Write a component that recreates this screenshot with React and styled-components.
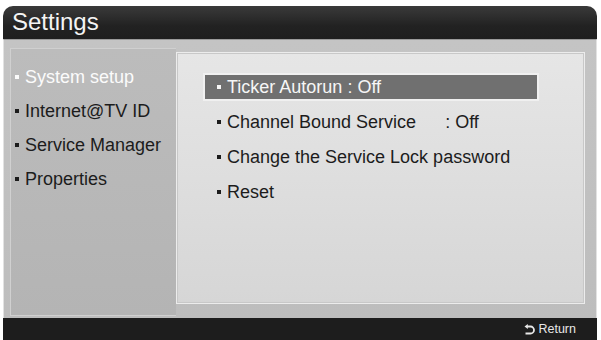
import React from 'react';
import styled, { createGlobalStyle } from 'styled-components';

const GlobalStyle = createGlobalStyle`
  html, body {
    margin: 0;
    padding: 0;
    background: #ffffff;
  }
  body {
    font-family: "Liberation Sans", Arial, sans-serif;
  }
`;

const Screen = styled.div`
  width: 594px;
  height: 334px;
  margin: 6px 0 0 3px;
  display: flex;
  flex-direction: column;
  border-radius: 10px 10px 0 0;
  overflow: hidden;
`;

const TitleBar = styled.div`
  height: 33px;
  flex-shrink: 0;
  background: linear-gradient(to bottom, #3a3a3a, #222222 60%, #1e1e1e);
  color: #f4f4f4;
  font-size: 24px;
  line-height: 32px;
  padding-left: 9px;
`;

const Body = styled.div`
  flex: 1;
  display: flex;
  background: linear-gradient(to bottom, #c4c4c4, #bdbdbd);
  padding: 8px 8px 2px 6px;
  border-left: 1px solid #e2e2e2;
  border-right: 1px solid #e2e2e2;
  border-top: 1px solid #9a9a9a;
`;

const LeftPanel = styled.ul`
  box-sizing: border-box;
  width: 166px;
  flex-shrink: 0;
  margin: 0;
  padding: 18px 0 0 4px;
  list-style: none;
  background: linear-gradient(to bottom, #bcbcbc, #b4b4b4);
  border: 1px solid #d0d0d0;
  border-right: none;
`;

const LeftItem = styled.li`
  font-size: 18px;
  height: 34px;
  line-height: 20px;
  color: ${(p) => (p.$active ? '#fbfbfb' : '#1c1c1c')};
  display: flex;
  align-items: flex-start;
`;

const Bullet = styled.span`
  display: inline-block;
  width: 4px;
  height: 4px;
  margin: 8px 6px 0 0;
  background: currentColor;
  flex-shrink: 0;
`;

const RightPanel = styled.ul`
  flex: 1;
  margin: 4px 3px 12px 0;
  padding: 20px 0 0 26px;
  list-style: none;
  background: linear-gradient(to bottom, #e6e6e6, #dedede 50%, #d6d6d6);
  border: 1px solid #ececec;
  box-shadow: inset 0 0 0 1px #c8c8c8;
`;

const RightItem = styled.li`
  width: 336px;
  height: 28px;
  box-sizing: border-box;
  margin-bottom: 7px;
  padding-left: 12px;
  font-size: 18px;
  display: flex;
  align-items: center;
  color: ${(p) => (p.$focus ? '#f6f6f6' : '#1c1c1c')};
  background: ${(p) => (p.$focus ? '#707070' : 'transparent')};
  border: 2px solid ${(p) => (p.$focus ? '#f0f0f0' : 'transparent')};
  white-space: pre;
`;

const RightBullet = styled(Bullet)`
  margin: 0 6px 0 0;
`;

const Value = styled.span`
  margin-left: 29px;
`;

const BottomBar = styled.div`
  height: 22px;
  flex-shrink: 0;
  background: #1d1d1d;
  display: flex;
  justify-content: flex-end;
  align-items: center;
  padding-right: 21px;
  color: #e8e8e8;
  font-size: 12.5px;
`;

const ReturnIcon = styled.svg`
  width: 11px;
  height: 11px;
  margin-right: 3px;
`;

function App() {
  return (
    <>
      <GlobalStyle />
      <Screen>
        <TitleBar>Settings</TitleBar>
        <Body>
          <LeftPanel>
            <LeftItem $active><Bullet />System setup</LeftItem>
            <LeftItem><Bullet />Internet@TV ID</LeftItem>
            <LeftItem><Bullet />Service Manager</LeftItem>
            <LeftItem><Bullet />Properties</LeftItem>
          </LeftPanel>
          <RightPanel>
            <RightItem $focus><RightBullet />Ticker Autorun : Off</RightItem>
            <RightItem><RightBullet />Channel Bound Service<Value>: Off</Value></RightItem>
            <RightItem><RightBullet />Change the Service Lock password</RightItem>
            <RightItem><RightBullet />Reset</RightItem>
          </RightPanel>
        </Body>
        <BottomBar>
          <ReturnIcon viewBox="0 0 11 11">
            <path d="M3 2.5 H6.5 A3.5 3.5 0 0 1 6.5 9.5 H1.5" fill="none" stroke="#e8e8e8" strokeWidth="1.8" />
            <polygon points="0.5,2.5 3.8,0 3.8,5" fill="#e8e8e8" />
          </ReturnIcon>
          Return
        </BottomBar>
      </Screen>
    </>
  );
}

export default App;
